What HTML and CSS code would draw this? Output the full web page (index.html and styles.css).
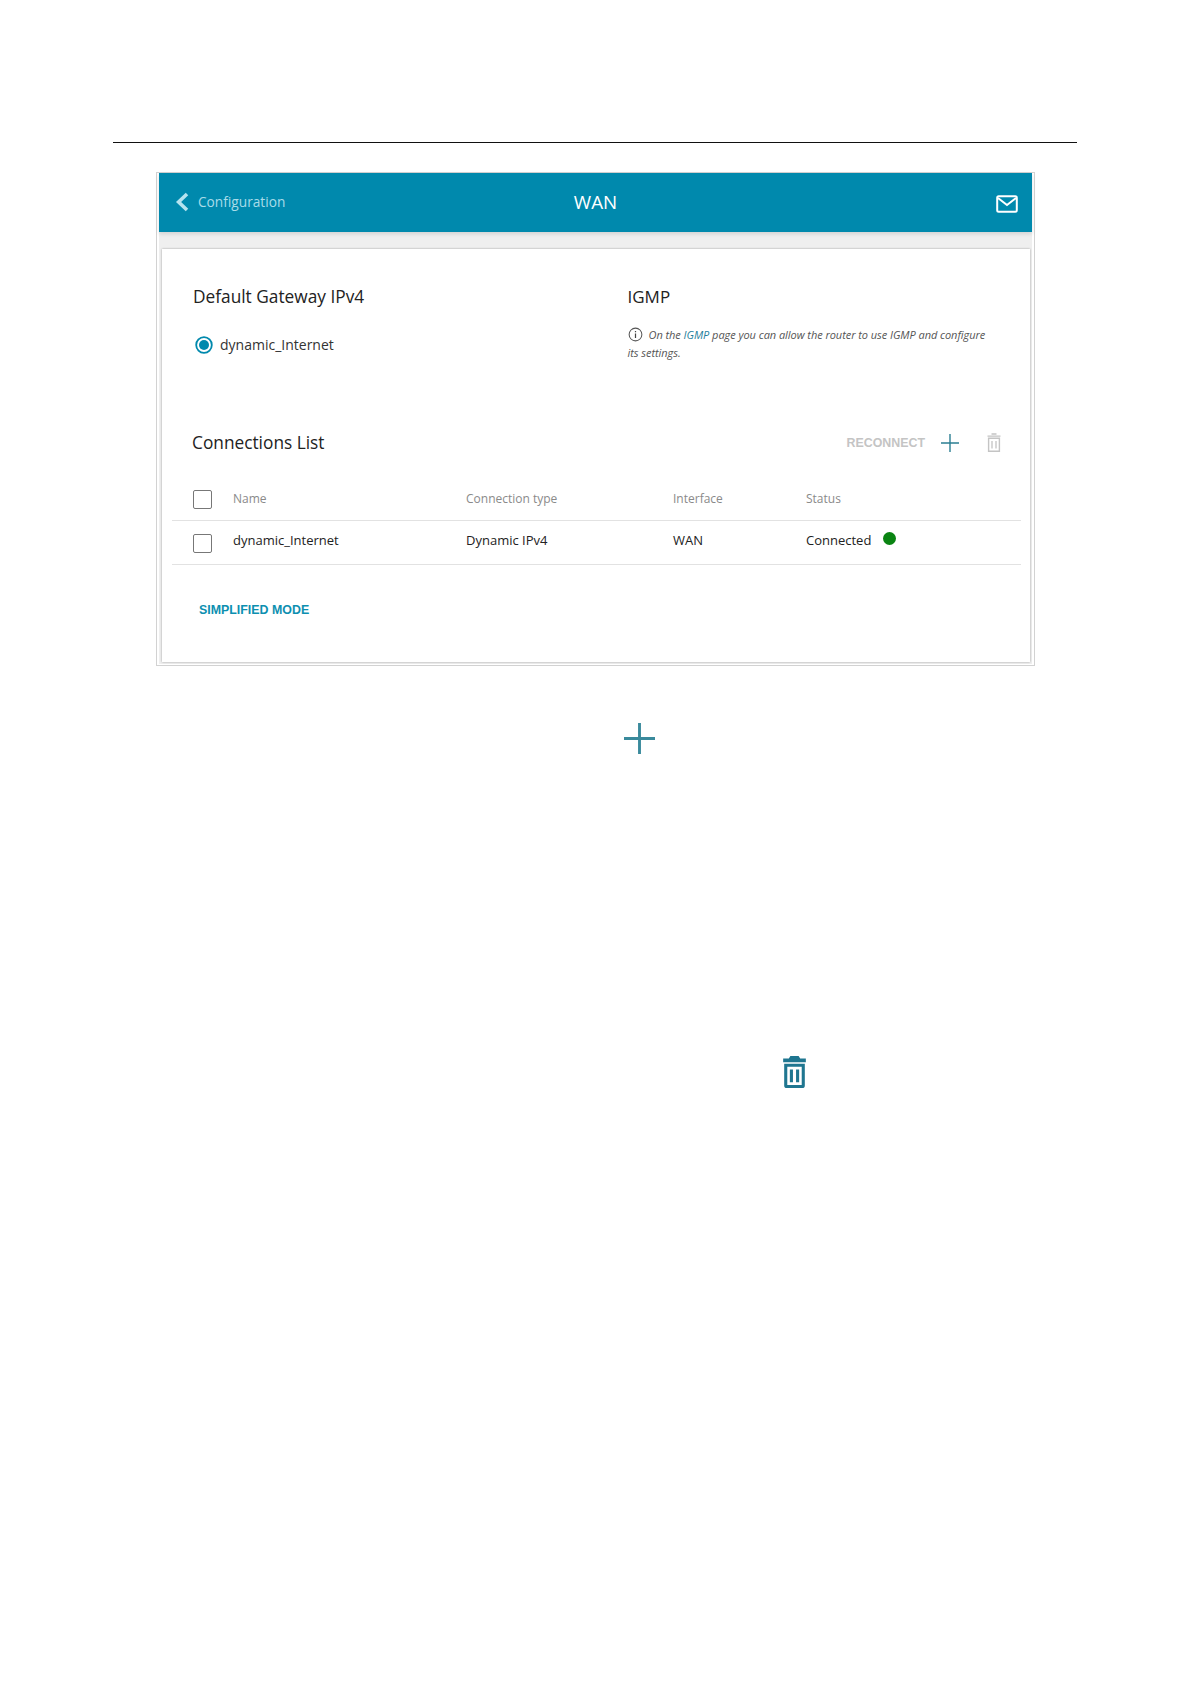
FILE: index.html
```html
<!DOCTYPE html>
<html lang="en">
<head>
<meta charset="utf-8">
<title>WAN</title>
<link rel="stylesheet" href="styles.css">
</head>
<body>
<div class="rule"></div>
<div class="frame">
  <header class="topbar">
    <div class="back">
      <svg class="chev" viewBox="0 0 14 20"><path d="M12 2 3.600 10l8.400 8" fill="none" stroke="#b5e3ef" stroke-width="3.600"/></svg>
      <span>Configuration</span>
    </div>
    <div class="title">WAN</div>
    <svg class="mail" viewBox="0 0 22 18"><rect x="1.200" y="1.200" width="19.600" height="15.600" rx="1.500" fill="none" stroke="#fff" stroke-width="2"/><path d="M2 3l9 7 9-7" fill="none" stroke="#fff" stroke-width="2"/></svg>
  </header>
  <div class="band">
    <main class="card">
      <section class="top">
        <div class="gateway">
          <h2 class="h-gateway">Default Gateway IPv4</h2>
          <label class="radio">
            <svg class="radio-ico" viewBox="0 0 18 18"><circle cx="9" cy="9" r="7.800" fill="none" stroke="#0089ad" stroke-width="1.800"/><circle cx="9" cy="9" r="5" fill="#0089ad"/></svg>
            <span>dynamic_Internet</span>
          </label>
        </div>
        <div class="igmp">
          <h2 class="h-igmp">IGMP</h2>
          <p class="note"><svg class="info" viewBox="0 0 16 16"><circle cx="8" cy="8" r="6.800" fill="none" stroke="#555" stroke-width="1.100"/><path d="M8 7v4.600M8 4.200v1.500" stroke="#444" stroke-width="1.300"/></svg><span class="note-text">On the <a class="link">IGMP</a> page you can allow the router to use IGMP and configure its settings.</span></p>
        </div>
      </section>
      <section class="list-head">
        <h2 class="h-list">Connections List</h2>
        <div class="actions">
          <span class="reconnect">RECONNECT</span>
          <svg class="plus-sm" viewBox="0 0 18 18"><path d="M9 0v18M0 9h18" stroke="#2b7f93" stroke-width="1.400"/></svg>
          <svg class="trash-sm" viewBox="0 0 14 19"><path d="M4.500 1h5M.5 3.200h13" stroke="#c4c4c4" stroke-width="1.300" fill="none"/><path d="M1.600 5.200h10.800v13H1.600z" fill="none" stroke="#c4c4c4" stroke-width="1.400"/><path d="M5 8v7.500M9 8v7.500" stroke="#c4c4c4" stroke-width="1.300"/></svg>
        </div>
      </section>
      <div class="table">
        <div class="row head">
          <span class="check"></span><span class="c-name">Name</span><span class="c-type">Connection type</span><span class="c-if">Interface</span><span class="c-st">Status</span>
        </div>
        <div class="row body-row">
          <span class="check"></span><span class="c-name">dynamic_Internet</span><span class="c-type">Dynamic IPv4</span><span class="c-if">WAN</span><span class="c-st">Connected<i class="dot"></i></span>
        </div>
      </div>
      <a class="simple">SIMPLIFIED MODE</a>
    </main>
  </div>
</div>
<svg class="plus-lg" viewBox="0 0 32 32"><path d="M16 0v32M0 16h32" stroke="#3a8a9c" stroke-width="3"/></svg>
<svg class="trash-lg" viewBox="0 0 24 32"><path d="M8 1h8l1.500 2.500H23V7H1V3.500h5.500z" fill="#1f7690"/><path d="M3.500 10h17v19.500a1 1 0 0 1-1 1h-15a1 1 0 0 1-1-1z" fill="none" stroke="#1f7690" stroke-width="3"/><path d="M9 14v12.500M15 14v12.500" stroke="#1f7690" stroke-width="3"/></svg>
</body>
</html>
```
FILE: styles.css
```css
html, body { margin: 0; padding: 0; background: #fff; }
body { height: 1684px; overflow: hidden; font-family: "Open Sans", "Noto Sans", sans-serif; color: #222; }
.rule { height: 1px; background: #111; margin: 142px 114px 0 113px; }
.frame { width: 877px; height: 492px; margin: 29px 0 0 156px; border: 1px solid #d2d2d2; }
.topbar { margin: 0 2px; height: 59px; background: #0089ad; display: flex; align-items: center; position: relative; box-shadow: 0 2px 4px rgba(0,0,0,.12); z-index: 1; }
.back { display: flex; align-items: center; margin-left: 16px; color: #a9dce9; font-size: 13.700px; gap: 9px; margin-top: -2px; }
.chev { width: 14px; height: 20px; }
.title { position: absolute; left: 0; right: 0; top: 17px; text-align: center; color: #fff; font-size: 18.800px; line-height: 24px; }
.mail { width: 22px; height: 18px; margin-left: auto; margin-right: 14px; margin-top: 2px; position: relative; }
.band { margin: 0 2px; height: 432px; background: #efefef; padding: 17px 3px 0 3px; box-sizing: border-box; }
.card { background: #fff; height: 413px; box-shadow: 0 0 2px rgba(0,0,0,.35); padding: 0 9px 0 10px; box-sizing: border-box; margin-right: -1px; overflow: hidden; }
.top { display: flex; height: 179px; padding-top: 37px; box-sizing: border-box; }
.gateway { width: 455.500px; padding-left: 21px; box-sizing: border-box; }
.igmp { flex: 1; }
h2 { margin: 0; font-weight: 400; font-size: 17px; line-height: 22px; color: #222; }
.h-gateway { font-size: 17.300px; }
.radio { display: flex; align-items: center; gap: 7px; margin-top: 27px; padding-left: 2px; font-size: 14px; color: #333; }
.radio-ico { width: 18px; height: 18px; }
.note { margin: 18px 0 0; font-size: 11px; line-height: 17.500px; font-style: italic; color: #555; width: 366px; letter-spacing: -.05px; }
.info { width: 15px; height: 15px; vertical-align: -3px; margin-right: 6px; }
.link { color: #1f7f9d; }
.list-head { display: flex; align-items: center; justify-content: space-between; height: 30px; padding-left: 20px; }
.h-list { font-size: 17.300px; }
.actions { display: flex; align-items: center; margin-right: 20px; }
.reconnect { font-family: "Liberation Sans", Arial, sans-serif; font-weight: 700; font-size: 12.400px; color: #c4c4c4; }
.plus-sm { width: 18px; height: 18px; margin-left: 16px; }
.trash-sm { width: 14px; height: 19px; margin-left: 28px; position: relative; top: -1px; }
.table { margin-top: 19px; }
.row { display: flex; align-items: center; border-bottom: 1px solid #e2e2e2; font-size: 13px; height: 44px; box-sizing: border-box; }
.head { color: #8a8a8a; font-size: 12px; }
.body-row { padding-bottom: 5px; }
.check { width: 19px; height: 19px; border: 1.600px solid #777; border-radius: 2px; margin-left: 21px; box-sizing: border-box; flex: none; position: relative; top: 1px; }
.body-row .check { top: 3px; }
.c-name { margin-left: 21px; width: 233px; }
.c-type { width: 207px; }
.c-if { width: 133px; }
.c-st { display: flex; align-items: center; }
.dot { width: 13px; height: 13px; border-radius: 50%; background: #0a8412; margin-left: 12px; position: relative; top: -2px; }
.simple { display: block; margin: 38px 0 0 27px; font-family: "Liberation Sans", Arial, sans-serif; font-weight: 700; font-size: 12.400px; line-height: 15px; color: #0d8fb0; }
.plus-lg { display: block; width: 31px; height: 31px; margin: 57px 0 0 624px; }
.trash-lg { display: block; width: 25px; height: 33px; margin: 301px 0 0 782px; }
```
